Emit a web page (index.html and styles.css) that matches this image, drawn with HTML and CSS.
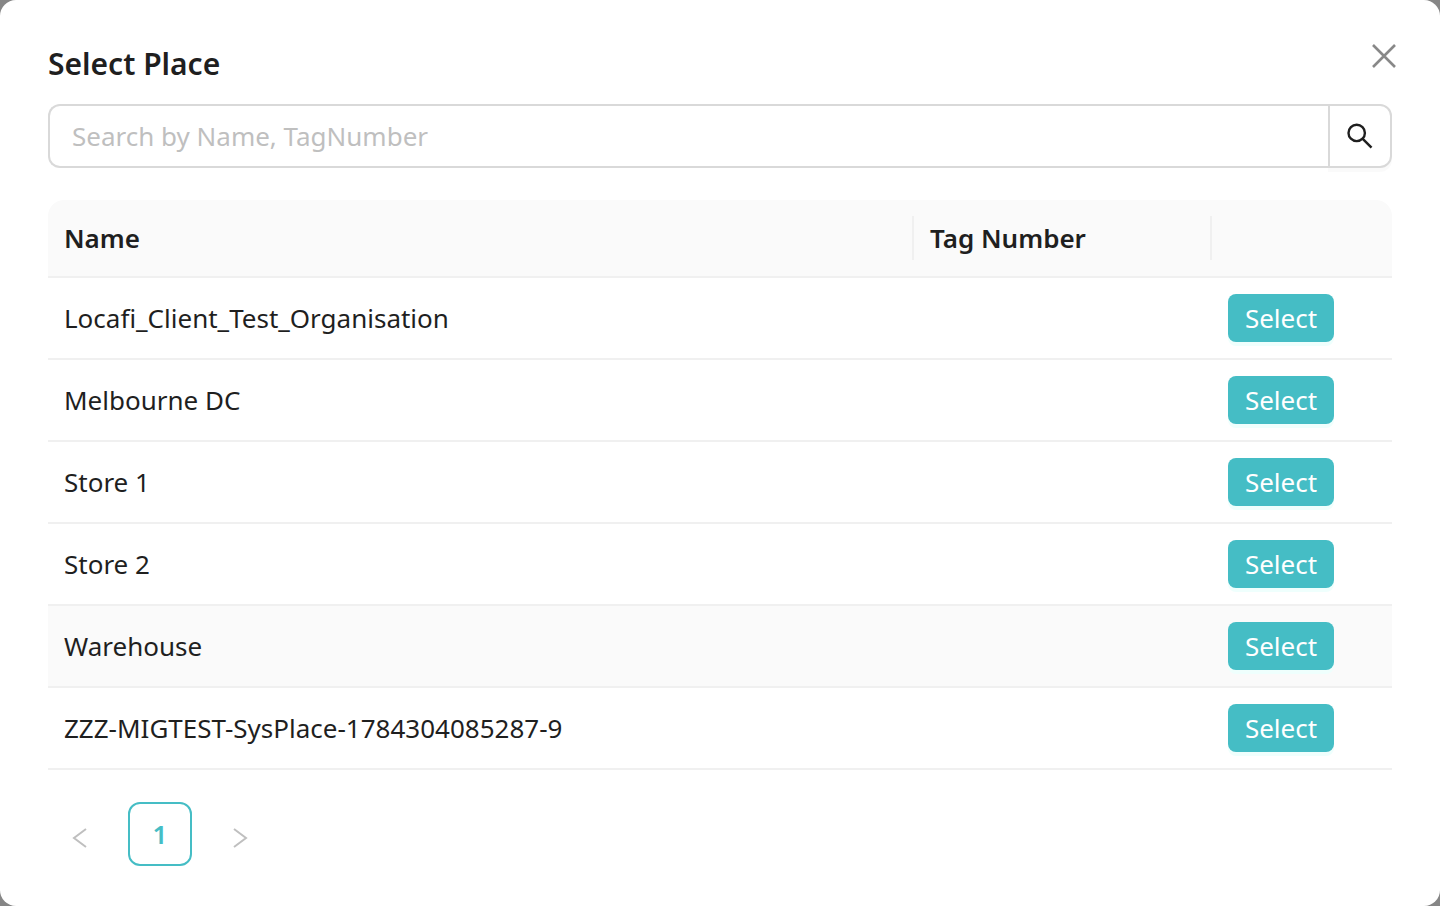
FILE: index.html
```
<!DOCTYPE html>
<html lang="en">

<head>
  <meta charset="UTF-8" />
  <title>Select Place</title>
  <meta name="viewport" content="width=device-width, initial-scale=1.0" />
  <link rel="stylesheet" href="styles.css">
</head>

<body>
  <div class="modal" role="dialog" aria-labelledby="modalTitle">
    <button class="modal-close" type="button" aria-label="Close">
      <svg viewBox="0 0 28 28" width="28" height="28">
        <path d="M3 3l22 22M25 3L3 25" />
      </svg>
    </button>

    <h1 class="modal-title" id="modalTitle">Select Place</h1>

    <form class="search" role="search">
      <input type="text" placeholder="Search by Name, TagNumber" aria-label="Search by Name, TagNumber" />
      <button type="button" aria-label="Search">
        <svg viewBox="0 0 28 28" width="28" height="28">
          <circle cx="10.7" cy="10.9" r="8.2" />
          <path d="M16.5 16.7l9 9" />
        </svg>
      </button>
    </form>

    <table class="places">
      <thead>
        <tr>
          <th>Name</th>
          <th class="col-tag">Tag Number</th>
          <th class="col-action"></th>
        </tr>
      </thead>
      <tbody>
        <tr>
          <td>Locafi_Client_Test_Organisation</td>
          <td></td>
          <td><button class="btn-select" type="button">Select</button></td>
        </tr>
        <tr>
          <td>Melbourne DC</td>
          <td></td>
          <td><button class="btn-select" type="button">Select</button></td>
        </tr>
        <tr>
          <td>Store 1</td>
          <td></td>
          <td><button class="btn-select" type="button">Select</button></td>
        </tr>
        <tr>
          <td>Store 2</td>
          <td></td>
          <td><button class="btn-select" type="button">Select</button></td>
        </tr>
        <tr class="active">
          <td>Warehouse</td>
          <td></td>
          <td><button class="btn-select" type="button">Select</button></td>
        </tr>
        <tr>
          <td>ZZZ-MIGTEST-SysPlace-1784304085287-9</td>
          <td></td>
          <td><button class="btn-select" type="button">Select</button></td>
        </tr>
      </tbody>
    </table>

    <nav class="pagination" aria-label="Pages">
      <button class="page-arrow" type="button" aria-label="Previous page" disabled>
        <svg viewBox="0 0 24 24" width="24" height="24">
          <path d="M18 3L6 12l12 9" />
        </svg>
      </button>
      <button class="page-current" type="button" aria-current="page">1</button>
      <button class="page-arrow" type="button" aria-label="Next page" disabled>
        <svg viewBox="0 0 24 24" width="24" height="24">
          <path d="M6 3l12 9-12 9" />
        </svg>
      </button>
    </nav>
  </div>
</body>

</html>
```
FILE: styles.css
```
* {
  box-sizing: border-box;
}

body {
  margin: 0;
  background: #868686;
  color: #1f1f1f;
  font-family: "Segoe UI", "Noto Sans", "Open Sans", sans-serif;
  font-size: 26px;
  line-height: 44px;
}

button,
input {
  font: inherit;
  color: inherit;
}

button {
  padding: 0;
  cursor: pointer;
}

svg {
  display: block;
  fill: none;
  stroke: currentColor;
  stroke-width: 2;
}

.modal {
  position: relative;
  min-height: 100vh;
  padding: 40px 48px;
  background: #fff;
  border-radius: 16px;
}

.modal-close {
  position: absolute;
  top: 34px;
  right: 34px;
  display: flex;
  align-items: center;
  justify-content: center;
  width: 44px;
  height: 44px;
  background: none;
  border: none;
  color: #888;
}

.modal-close svg {
  stroke-width: 2.6;
}

.modal-title {
  margin: 0 0 16px;
  font-size: 30px;
  font-weight: 600;
  line-height: 48px;
}

.search {
  display: flex;
  height: 64px;
  margin-bottom: 32px;
}

.search input {
  flex: 1;
  min-width: 0;
  padding: 0 22px;
  background: #fff;
  border: 2px solid #d9d9d9;
  border-right: none;
  border-radius: 12px 0 0 12px;
  outline: none;
}

.search input::placeholder {
  color: #bfbfbf;
  opacity: 1;
}

.search button {
  display: flex;
  align-items: center;
  justify-content: center;
  width: 64px;
  background: #fff;
  border: 2px solid #d9d9d9;
  border-radius: 0 12px 12px 0;
  box-shadow: 0 4px 0 rgba(0, 0, 0, 0.02);
}

.search svg {
  stroke-width: 2.4;
}

.places {
  width: 100%;
  table-layout: fixed;
  border-collapse: separate;
  border-spacing: 0;
}

.places th,
.places td {
  padding: 16px;
  border-bottom: 2px solid #f0f0f0;
  text-align: left;
}

.places th {
  position: relative;
  height: 78px;
  background: #fafafa;
  font-weight: 600;
}

.places th:first-child {
  border-top-left-radius: 16px;
}

.places th:last-child {
  border-top-right-radius: 16px;
}

.places th:not(:last-child)::after {
  content: "";
  position: absolute;
  top: 16px;
  right: 0;
  width: 2px;
  height: 44px;
  background: #f0f0f0;
}

.places td {
  height: 82px;
}

.places .col-tag {
  width: 298px;
}

.places .col-action {
  width: 180px;
}

.places .active td {
  background: #fafafa;
}

.btn-select {
  display: block;
  min-width: 106px;
  height: 48px;
  padding: 0 16px;
  background: #45bdc5;
  border: none;
  border-radius: 8px;
  box-shadow: 0 4px 0 #effffd;
  color: #fff;
}

.pagination {
  display: flex;
  gap: 16px;
  margin-top: 32px;
}

.pagination button {
  width: 64px;
  height: 64px;
  background: #fff;
  border: none;
  border-radius: 12px;
}

.pagination .page-current {
  border: 2px solid #45bdc5;
  color: #45bdc5;
  font-weight: 600;
}

.pagination .page-arrow {
  display: flex;
  align-items: center;
  justify-content: center;
  padding-top: 8px;
  color: #bfbfbf;
  cursor: not-allowed;
}
```
